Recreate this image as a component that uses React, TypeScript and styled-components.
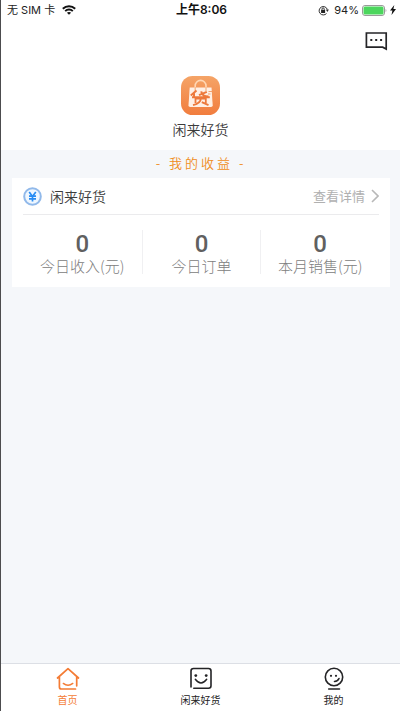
import React from "react";
import styled, { createGlobalStyle } from "styled-components";

const GlobalStyle = createGlobalStyle`
  * { box-sizing: border-box; }
  body {
    margin: 0;
    background: #f5f7fa;
    font-family: Inter, "Noto Sans CJK SC", sans-serif;
    color: #3c3c3c;
  }
  button { border: 0; padding: 0; background: none; font: inherit; color: inherit; cursor: pointer; }
  a { color: inherit; text-decoration: none; }
  h1, h2, h3, p, dl, dd, dt { margin: 0; font-weight: 350; }
  svg { display: block; flex: none; }
`;

const Screen = styled.div`
  min-height: 100vh;
  display: flex;
  flex-direction: column;
  border-left: 1px solid #4c4c4e;
`;

const Header = styled.header`
  background: #fff;
  height: 150px;
`;

const StatusBar = styled.div`
  display: grid;
  grid-template-columns: 1fr auto 1fr;
  align-items: center;
  height: 20px;
  padding: 0 4px 0 6px;
  font-size: 11px;
  line-height: 20px;
  color: #222;
`;

const StatusGroup = styled.div<{ $end?: boolean }>`
  display: flex;
  align-items: center;
  gap: ${(p) => (p.$end ? 3 : 7)}px;
  justify-content: ${(p) => (p.$end ? "flex-end" : "flex-start")};
`;

const BatteryLevel = styled.span`
  padding-left: 2px;
`;

const Clock = styled.time`
  font-size: 12px;
  font-weight: 600;
  color: #111;
`;

const Toolbar = styled.div`
  display: flex;
  justify-content: flex-end;
  height: 56px;
  padding: 10px 12px 0 0;
`;

const MessageButton = styled.button`
  width: 24px;
  height: 22px;
`;

const Brand = styled.div`
  display: flex;
  flex-direction: column;
  align-items: center;
  gap: 4px;
`;

const BrandName = styled.h1`
  font-family: "Noto Sans CJK SC", sans-serif;
  font-size: 14px;
  line-height: 20px;
`;

const Content = styled.main`
  flex: 1;
  padding: 0 10px 0 11px;
`;

const SectionTitle = styled.h2`
  padding-bottom: 2px;
  font-family: "Noto Sans CJK SC", sans-serif;
  font-size: 13px;
  line-height: 26px;
  letter-spacing: 3px;
  text-align: center;
  color: #f08c20;
`;

const Card = styled.section`
  height: 109px;
  padding: 0 11px;
  background: #fff;
`;

const CardHead = styled.div`
  display: flex;
  align-items: center;
  height: 37px;
  gap: 8px;
  border-bottom: 1px solid #ebebed;
`;

const CardName = styled.h3`
  flex: 1;
  font-family: "Noto Sans CJK SC", sans-serif;
  font-size: 14px;
  line-height: 20px;
`;

const DetailLink = styled.a`
  display: flex;
  align-items: center;
  gap: 6px;
  font-size: 13px;
  line-height: 20px;
  && { color: #b0b0b0; }
`;

const Stats = styled.dl`
  display: grid;
  grid-template-columns: repeat(3, 1fr);
  margin-top: 15px;
`;

const Stat = styled.div`
  display: flex;
  flex-direction: column-reverse;
  justify-content: flex-end;
  align-items: center;
  height: 44px;
  padding-top: 2px;
  & + & { border-left: 1px solid #f0f0f2; }
`;

const StatValue = styled.dd`
  font-family: Roboto, sans-serif;
  font-size: 24px;
  font-weight: 500;
  line-height: 24px;
  color: #606060;
`;

const StatLabel = styled.dt`
  font-family: "Noto Sans CJK SC", sans-serif;
  font-size: 15px;
  font-weight: 300;
  line-height: 20px;
  color: #808080;
  white-space: nowrap;
`;

const TabBar = styled.nav`
  display: grid;
  grid-template-columns: repeat(3, 1fr);
  height: 48px;
  background: #fff;
  border-top: 1px solid #dcdfe5;
`;

const Tab = styled.a<{ $active?: boolean }>`
  display: flex;
  flex-direction: column;
  align-items: center;
  gap: 2px;
  padding-top: 3px;
  font-size: 10px;
  line-height: 14px;
  && { color: ${(p) => (p.$active ? "#f47c35" : "#222")}; }
`;

const WifiIcon = () => (
  <svg width="14" height="10" viewBox="0 0 14 10" fill="none" stroke="#111" strokeWidth="2">
    <path d="M.8 3.7C4.3.4 9.7.4 13.2 3.7M3.2 6.1C5.3 4.1 8.7 4.1 10.8 6.1" />
    <path d="M7 9.8 4.9 7.7C6.1 6.7 7.9 6.7 9.1 7.7Z" fill="#111" stroke="none" />
  </svg>
);

const RotationLockIcon = () => (
  <svg width="11" height="11" viewBox="0 0 11 11" fill="none" stroke="#333">
    <path d="M8.5 8.5A4.2 4.2 0 1 1 9.3 4.4" />
    <path d="M7.8 4.6h3.1L9.4 7Z" fill="#333" stroke="none" />
    <path d="M3.1 5h4v3h-4Z" fill="#222" stroke="none" />
    <path d="M4 5.2V4a1.1 1.1 0 0 1 2.2 0v1.2" />
  </svg>
);

const BatteryIcon = () => (
  <svg width="25" height="11" viewBox="0 0 25 11">
    <rect x=".5" y=".5" width="22" height="10" rx="2.5" fill="#fff" stroke="#9a9a9a" />
    <rect x="1.5" y="1.5" width="20" height="8" rx="1.5" fill="#4cd65d" />
    <path d="M23.6 4v3c1-.4 1-2.6 0-3Z" fill="#999" />
  </svg>
);

const BoltIcon = () => (
  <svg width="6" height="10" viewBox="0 0 6 10">
    <path d="M4.3 0 0 5.6h2.4L1.5 10 6 4.1H3.4Z" fill="#111" />
  </svg>
);

const MessageIcon = () => (
  <svg width="24" height="20" viewBox="0 0 24 20" fill="none" stroke="#252528" strokeWidth="1.7">
    <path d="M22.2 17.7V2H2.4v14.2h16.3L22.2 18Z" />
    <path d="M6.3 9h2M11.2 9h2M16.1 9h2" strokeWidth="2.1" />
  </svg>
);

const BrandLogo = () => (
  <svg width="39" height="39" viewBox="0 0 39 39" role="img" aria-label="闲来好货">
    <defs>
      <linearGradient id="brand" x1="0" y1="0" x2="0" y2="1">
        <stop offset="0" stopColor="#f5a467" />
        <stop offset="1" stopColor="#f17d3e" />
      </linearGradient>
    </defs>
    <rect width="39" height="39" rx="11.5" fill="url(#brand)" />
    <path d="M14.2 14V9.8a5.4 5.4 0 0 1 10.8 0V14" fill="none" stroke="#ffd7b4" strokeWidth="1.6" />
    <path d="M8.7 11.5H30.5L31.7 29.2Q31.8 31 30 31H9.2Q7.4 31 7.5 29.2Z" fill="#fff0e5" />
    <path d="M14.2 15V11M25 15V11" stroke="#f4b281" strokeWidth="1.2" />
    <g fill="none" stroke="#ed793b" strokeWidth="2">
      <path d="M15.5 14.5 9.8 19.5M13 17.5V22M11 21.3H28.8M18 19.2 25.8 15.8M20.2 15.4Q21 20.4 27.5 20.5" />
      <path d="M14.5 27V22.5H24.8V27M19.8 22.5Q20 27 12 29.2M20.8 26.2 27.5 29.1" strokeWidth="1.8" />
    </g>
    <path d="M27.5 15.5H31M27 18H29.5" stroke="#f2a16f" />
  </svg>
);

const YuanIcon = () => (
  <svg width="19" height="19" viewBox="0 0 19 19" fill="none">
    <circle cx="9.5" cy="9.5" r="8.3" fill="#eff7ff" stroke="#91b9ea" strokeWidth="2" />
    <path d="m6.2 5 3.3 4.4L12.8 5M9.5 9.2v5.3M6 9.2h7M6 11.9h7" stroke="#278cf4" strokeWidth="1.7" />
  </svg>
);

const ChevronIcon = () => (
  <svg width="8" height="14" viewBox="0 0 8 14" fill="none" stroke="#b8b8b8" strokeWidth="1.6">
    <path d="m1 1 6 6-6 6" />
  </svg>
);

const HomeIcon = () => (
  <svg width="24" height="24" viewBox="0 0 24 24" fill="none" stroke="#f47c35" strokeWidth="1.7" strokeLinecap="round" strokeLinejoin="round">
    <path d="M1.5 11 12 1.7 22.5 11M3.4 9.8V20Q3.4 22 5.4 22H19.5M20.7 9.8V18.8" />
    <path d="M7.3 16.4Q12 20.2 16.8 16.4" strokeWidth="1.4" />
  </svg>
);

const GoodsIcon = () => (
  <svg width="24" height="24" viewBox="0 0 24 24" fill="none" stroke="#242426" strokeWidth="1.6" strokeLinecap="round">
    <path d="M2 20V4Q2 1.5 4.5 1.5H19.5Q22 1.5 22 4V18.8Q22 21.3 19.5 21.3H4.8" />
    <path d="M6.3 12.3Q12 19.7 17.7 12.3" strokeWidth="1.4" />
    <circle cx="6.8" cy="8.6" r="1.4" fill="#242426" stroke="none" />
    <circle cx="17.2" cy="8.6" r="1.4" fill="#242426" stroke="none" />
  </svg>
);

const ProfileIcon = () => (
  <svg width="24" height="24" viewBox="0 0 24 24" fill="none" stroke="#242426" strokeWidth="1.6" strokeLinecap="round">
    <circle cx="12" cy="10" r="8.7" />
    <path d="M12.5 14.5Q15.8 14.3 17 11.5M6.7 22H17.5" />
    <circle cx="9" cy="8.8" r="1.1" fill="#242426" stroke="none" />
    <circle cx="14" cy="8.8" r="1.1" fill="#242426" stroke="none" />
  </svg>
);

const stats = [
  { label: "今日收入(元)", value: 0 },
  { label: "今日订单", value: 0 },
  { label: "本月销售(元)", value: 0 },
];

export default function App() {
  return (
    <>
      <GlobalStyle />
      <Screen>
        <Header>
          <StatusBar>
            <StatusGroup>
              <span>无 SIM 卡</span>
              <WifiIcon />
            </StatusGroup>
            <Clock>上午8:06</Clock>
            <StatusGroup $end>
              <RotationLockIcon />
              <BatteryLevel>94%</BatteryLevel>
              <BatteryIcon />
              <BoltIcon />
            </StatusGroup>
          </StatusBar>
          <Toolbar>
            <MessageButton aria-label="消息">
              <MessageIcon />
            </MessageButton>
          </Toolbar>
          <Brand>
            <BrandLogo />
            <BrandName>闲来好货</BrandName>
          </Brand>
        </Header>
        <Content>
          <SectionTitle>- 我的收益 -</SectionTitle>
          <Card>
            <CardHead>
              <YuanIcon />
              <CardName>闲来好货</CardName>
              <DetailLink href="#details">
                查看详情
                <ChevronIcon />
              </DetailLink>
            </CardHead>
            <Stats>
              {stats.map((s) => (
                <Stat key={s.label}>
                  <StatLabel>{s.label}</StatLabel>
                  <StatValue>{s.value}</StatValue>
                </Stat>
              ))}
            </Stats>
          </Card>
        </Content>
        <TabBar>
          <Tab href="#home" $active aria-current="page">
            <HomeIcon />
            首页
          </Tab>
          <Tab href="#goods">
            <GoodsIcon />
            闲来好货
          </Tab>
          <Tab href="#profile">
            <ProfileIcon />
            我的
          </Tab>
        </TabBar>
      </Screen>
    </>
  );
}
